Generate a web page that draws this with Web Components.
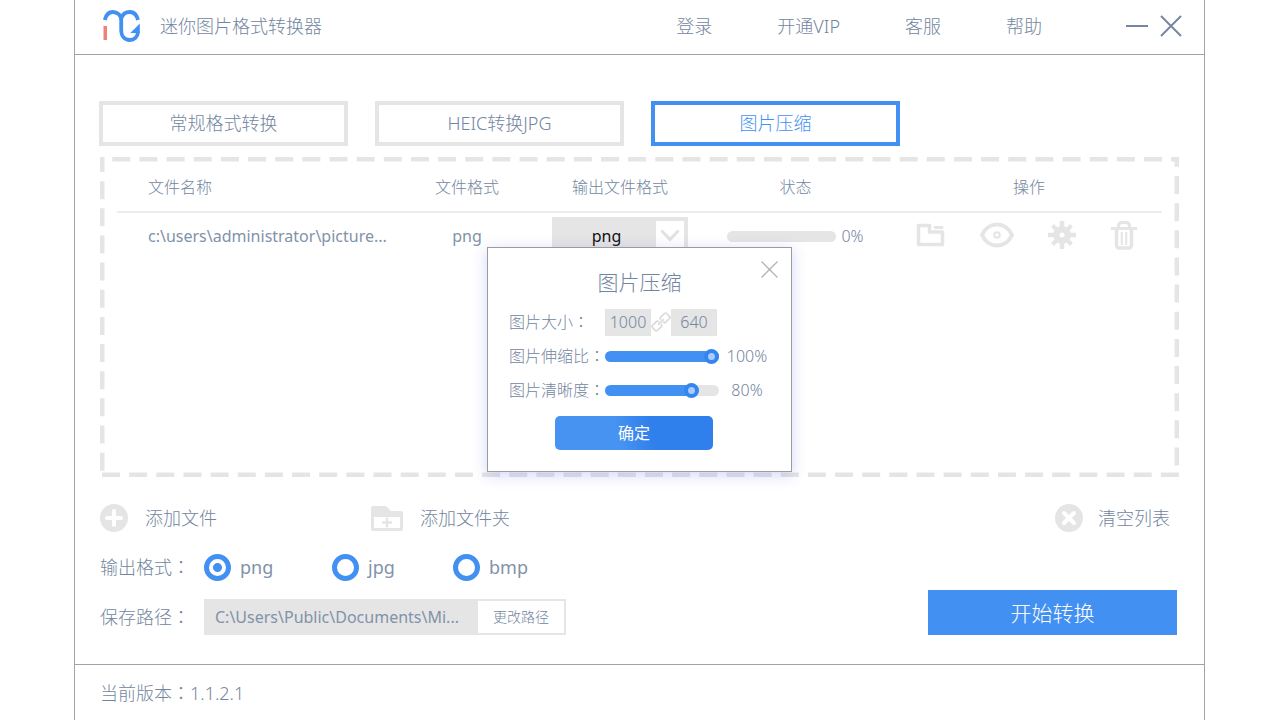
<!DOCTYPE html>
<html lang="zh-CN">
<head>
<meta charset="utf-8">
<title>迷你图片格式转换器</title>
<style>
  :root {
    --text: #7386a0;
    --text-soft: #8192aa;
    --blue: #4290f2;
    --grey: #e5e5e5;
    --line: #a3a3a3;
  }
  body {
    margin: 0;
    background: #fff;
    color: var(--text);
    font: 300 18px/24px "Noto Sans", "Noto Sans CJK SC", sans-serif;
  }
  .colon { font-family: "Noto Sans CJK TC", sans-serif; line-height: 1; }
</style>
</head>
<body>
<app-window>
  <title-bar slot="header">迷你图片格式转换器</title-bar>
  <mode-tabs></mode-tabs>
  <file-frame>
    <file-table></file-table>
    <compress-dialog slot="dialog"></compress-dialog>
  </file-frame>
  <list-actions></list-actions>
  <output-settings></output-settings>
  <span slot="footer">当前版本<span class="colon" lang="zh-TW">：</span>1.1.2.1</span>
</app-window>

<script>
const shared = `
  *, *::before, *::after { box-sizing: border-box; }
  button, input, select { font: inherit; color: inherit; margin: 0; padding: 0; border: 0; background: none; border-radius: 0; outline: none; }
  button { cursor: pointer; }
  svg { display: block; }
  .colon { font-family: "Noto Sans CJK TC", sans-serif; line-height: 1; }
`;
function define(name, css, html) {
  const template = document.createElement('template');
  template.innerHTML = `<style>${shared}${css}</style>${html}`;
  customElements.define(name, class extends HTMLElement {
    constructor() {
      super();
      this.attachShadow({ mode: 'open' }).append(template.content.cloneNode(true));
    }
  });
}

const icons = {
  logo: [38, 34, `<g fill="none" stroke="#4290f2" stroke-width="3.800"><path d="M1.800 11C3 6 6 3 9.800 3c4.500 0 8.400 3 8.400 8v10c0 6 3.500 10 8.600 10 4.500 0 7.700-3 8.200-8"/><path d="M18.200 9.500C19.500 5 23 3 26.800 3c4 0 7 3 8.200 8"/></g><path d="M36.800 14.500v9.500h-9.500z" fill="#4290f2"/><path d="M.5 17H4v14H.5z" fill="#ec8378"/>`],
  minimize: [22, 22, `<path d="M0 11h22" stroke="#7587a0" stroke-width="2"/>`],
  close: [22, 22, `<path d="M1 1l20 20M21 1L1 21" stroke="#7587a0" stroke-width="2"/>`],
  dismiss: [17, 17, `<path d="M.5.500l16 16M16.500.500l-16 16" stroke="#b4b4b4" stroke-width="1.300"/>`],
  chevron: [20, 14, `<path d="M1.500 1.500L10 10.500l8.500-9" fill="none" stroke="#e2e2e2" stroke-width="3"/>`],
  open: [30, 24, `<path d="M2.500 2.500h11v6.500h13v12.500h-24z" fill="none" stroke="#e5e5e5" stroke-width="3.500" stroke-linejoin="round"/><path d="M19 4.500h7" stroke="#e5e5e5" stroke-width="2.800" stroke-linecap="round"/>`],
  eye: [34, 26, `<path d="M2 13C8-1 26-1 32 13C26 27 8 27 2 13z" fill="none" stroke="#e5e5e5" stroke-width="4"/><circle cx="17" cy="13" r="2.800" fill="none" stroke="#e5e5e5" stroke-width="2"/>`],
  gear: [28, 28, `<g stroke="#e5e5e5" stroke-width="4.500"><path d="M14 0v28M0 14h28"/><path d="M4.500 4.500l19 19M23.500 4.500l-19 19" stroke-width="4"/></g><circle cx="14" cy="14" r="9" fill="#e5e5e5"/><circle cx="14" cy="14" r="2.500" fill="#fff"/>`],
  trash: [28, 30, `<g fill="none" stroke="#e5e5e5" stroke-width="3"><path d="M1 8.500h26"/><path d="M8.500 8V6q0-3.500 3.500-3.500h4q3.500 0 3.500 3.500v2"/><path d="M6.500 9v16q0 3 3 3h9q3 0 3-3V9" stroke-width="3.500"/><path d="M11.800 12v13M16.200 12v13" stroke-width="2"/></g>`],
  link: [20, 20, `<g transform="rotate(-45 10 10)" fill="none" stroke="#d9d9d9" stroke-width="1.600"><path d="M8.500 8.500V8q0-1.500-1.500-1.500H1.500Q0 6.500 0 8v4q0 1.500 1.500 1.500H7q1.500 0 1.500-1.500v-.5"/><path d="M11.500 8.500V8q0-1.500 1.500-1.500h5.500Q20 6.500 20 8v4q0 1.500-1.500 1.500H13q-1.500 0-1.500-1.500v-.5"/><path d="M6 10h8"/></g>`],
  add: [28, 28, `<circle cx="14" cy="14" r="14" fill="#e5e5e5"/><path d="M14 7v14M7 14h14" stroke="#fff" stroke-width="4" stroke-linecap="round"/>`],
  clear: [28, 28, `<circle cx="14" cy="14" r="14" fill="#e5e5e5"/><path d="M9 9l10 10M19 9L9 19" stroke="#fff" stroke-width="4" stroke-linecap="round"/>`],
  folder: [32, 26, `<path d="M2 1h13l5 5h10q2 0 2 2v16q0 2-2 2H2q-2 0-2-2V3Q0 1 2 1z" fill="#e5e5e5"/><path d="M3 12h26v11H3z" fill="#fff"/><path d="M16 12.500v10M11 17.500h10" stroke="#e5e5e5" stroke-width="2.400"/>`]
};
customElements.define('app-icon', class extends HTMLElement {
  connectedCallback() {
    if (this.shadowRoot) return;
    const [w, h, body] = icons[this.getAttribute('name')];
    this.attachShadow({ mode: 'open' }).innerHTML =
      `<style>:host{display:block;flex:none;width:${w}px;height:${h}px}svg{display:block}</style>` +
      `<svg width="${w}" height="${h}" viewBox="0 0 ${w} ${h}" aria-hidden="true">${body}</svg>`;
  }
});

define('app-window', `
  :host { display: flex; flex-direction: column; min-height: 100vh; box-sizing: border-box; margin: 0 75px 0 74px; border: solid var(--line); border-width: 0 1px; }
  main { flex: 1; padding: 46px 25px 28px 24px; border-bottom: 1px solid var(--line); }
  footer { display: flex; align-items: center; height: 55px; padding: 0 25px; }
`, `<slot name="header"></slot><main><slot></slot></main><footer><slot name="footer"></slot></footer>`);

define('title-bar', `
  :host { display: block; border-bottom: 1px solid var(--line); }
  header { display: flex; align-items: center; height: 54px; padding: 0 22px 2px 28px; }
  h1 { margin: 0 auto 0 19px; font: inherit; }
  nav { display: flex; gap: 65px; margin-right: 84px; }
  a { color: inherit; text-decoration: none; }
  .controls { display: flex; gap: 12px; }
`, `<header>
  <app-icon name="logo"></app-icon>
  <h1><slot></slot></h1>
  <nav><a href="#login">登录</a><a href="#vip">开通VIP</a><a href="#service">客服</a><a href="#help">帮助</a></nav>
  <div class="controls">
    <button aria-label="最小化"><app-icon name="minimize"></app-icon></button>
    <button aria-label="关闭"><app-icon name="close"></app-icon></button>
  </div>
</header>`);

define('mode-tabs', `
  :host { display: flex; gap: 27px; margin-bottom: 11px; }
  button { width: 249px; height: 45px; padding-bottom: 2px; border: 4px solid var(--grey); background: #fff; }
  button[aria-pressed=true] { border-color: var(--blue); color: var(--blue); }
`, `<button aria-pressed="false">常规格式转换</button><button aria-pressed="false">HEIC转换JPG</button><button aria-pressed="true">图片压缩</button>`);

define('file-frame', `
  :host { display: block; box-sizing: border-box; position: relative; min-height: 320px; margin-left: 1px; padding: 1px 17px; }
  .dashes { position: absolute; inset: 0; width: 100%; height: 100%; pointer-events: none; }
  line { stroke: var(--grey); stroke-width: 9; stroke-dasharray: 18 9.150; }
  ::slotted([slot=dialog]) { position: absolute; top: 90px; left: 0; right: 0; margin: 0 auto; }
`, `<svg class="dashes" aria-hidden="true">
  <line x1="0" y1="0" x2="100%" y2="0" stroke-dashoffset="14.850"/>
  <line x1="100%" y1="0" x2="100%" y2="100%" stroke-dashoffset="8.150"/>
  <line x1="0" y1="100%" x2="100%" y2="100%" stroke-dashoffset="25.150"/>
  <line x1="0" y1="0" x2="0" y2="100%" stroke-dashoffset="3"/>
</svg><slot></slot><slot name="dialog"></slot>`);

define('file-table', `
  :host { display: block; font-size: 16px; }
  table { width: 100%; table-layout: fixed; border-collapse: separate; border-spacing: 0; }
  th, td { padding: 0; text-align: center; white-space: nowrap; }
  th { height: 55px; padding-top: 4px; border-bottom: 2px solid #ededed; font-weight: inherit; }
  td { height: 46px; }
  td.name, .kind { font-weight: 400; color: var(--text-soft); }
  .name { padding-left: 31px; text-align: left; }
  .format { width: 156px; } .output { width: 150px; } .status { width: 201px; } .ops { width: 266px; }
  .pick { position: relative; width: 136px; height: 38px; margin: 0 auto; }
  select { appearance: none; width: 100%; height: 100%; padding-right: 27px; background: var(--grey); color: #111; font-weight: 400; text-align: center; text-align-last: center; }
  .arrow { position: absolute; top: 4px; right: 4px; bottom: 4px; display: grid; place-items: center; width: 28px; background: #fff; pointer-events: none; }
  .progress { display: flex; align-items: center; justify-content: center; gap: 5px; }
  .track { width: 109px; height: 11px; border-radius: 6px; background: var(--grey); }
  .tools { display: flex; align-items: center; justify-content: space-between; padding: 0 24px 2px 20px; }
`, `<table>
  <thead><tr><th class="name" scope="col">文件名称</th><th class="format" scope="col">文件格式</th><th class="output" scope="col">输出文件格式</th><th class="status" scope="col">状态</th><th class="ops" scope="col">操作</th></tr></thead>
  <tbody><tr>
    <td class="name">c:\\users\\administrator\\picture...</td>
    <td class="kind">png</td>
    <td><div class="pick"><select aria-label="输出文件格式"><option>png</option><option>jpg</option><option>bmp</option></select><span class="arrow"><app-icon name="chevron"></app-icon></span></div></td>
    <td><div class="progress"><div class="track" role="progressbar" aria-valuenow="0" aria-label="状态"></div>0%</div></td>
    <td><div class="tools">
      <button aria-label="打开"><app-icon name="open"></app-icon></button>
      <button aria-label="预览"><app-icon name="eye"></app-icon></button>
      <button aria-label="设置"><app-icon name="gear"></app-icon></button>
      <button aria-label="删除"><app-icon name="trash"></app-icon></button>
    </div></td>
  </tr></tbody>
</table>`);

define('compress-dialog', `
  :host { display: block; box-sizing: border-box; width: 305px; height: 225px; border: 1px solid #9c9ca0; background: #fff; box-shadow: 0 3px 14px rgba(70, 80, 220, .24); font-size: 16px; }
  .dismiss { position: absolute; top: 13px; right: 13px; }
  h2 { margin: 0; padding: 19px 0 13px; font-size: 21px; line-height: 30px; font-weight: inherit; text-align: center; }
  form { display: grid; grid-template-columns: 96px 114px 1fr; row-gap: 10px; align-items: center; padding: 0 16px 0 21px; }
  label { line-height: 24px; white-space: nowrap; }
  .size { display: flex; grid-column: 2 / 4; align-items: center; height: 24px; }
  .size input { width: 46px; height: 27px; background: var(--grey); text-align: center; }
  output { text-align: center; }
  input[type=range] { appearance: none; display: block; width: 100%; height: 15px; }
  input[type=range]::-webkit-slider-runnable-track { height: 11px; border-radius: 6px; background: linear-gradient(to right, var(--blue) var(--fill), var(--grey) var(--fill)); }
  input[type=range]::-webkit-slider-thumb { appearance: none; box-sizing: border-box; width: 15px; height: 15px; margin-top: -2px; border: 4px solid #3585ee; border-radius: 50%; background: #a9cbff; }
  .ok { display: block; width: 158px; height: 34px; margin: 14px 0 0 67px; border-radius: 5px; background: linear-gradient(75deg, #4693f2 40%, #2f7fec 62%); color: #fff; font-weight: 400; }
`, `<button class="dismiss" aria-label="关闭"><app-icon name="dismiss"></app-icon></button>
<h2>图片压缩</h2>
<form>
  <label for="w">图片大小<span class="colon" lang="zh-TW">：</span></label>
  <div class="size"><input id="w" value="1000"><app-icon name="link"></app-icon><input value="640" aria-label="高度"></div>
  <label for="scale">图片伸缩比<span class="colon" lang="zh-TW">：</span></label><input id="scale" type="range" value="100" style="--fill:100%"><output for="scale">100%</output>
  <label for="clarity">图片清晰度<span class="colon" lang="zh-TW">：</span></label><input id="clarity" type="range" value="80" style="--fill:78%"><output for="clarity">80%</output>
</form>
<button class="ok">确定</button>`);

define('list-actions', `
  :host { display: flex; align-items: center; margin: 27px 0 21px 1px; }
  button { display: flex; align-items: center; gap: 17px; height: 28px; }
  .file { width: 271px; }
  .clear { gap: 15px; margin: 0 9px 0 auto; }
`, `<button class="file"><app-icon name="add"></app-icon>添加文件</button>
<button><app-icon name="folder"></app-icon>添加文件夹</button>
<button class="clear"><app-icon name="clear"></app-icon>清空列表</button>`);

define('output-settings', `
  :host { display: flex; align-items: flex-end; justify-content: space-between; padding: 0 2px 0 1px; }
  fieldset { display: flex; align-items: center; height: 28px; margin: 0 0 18px; padding: 0; border: 0; }
  .caption { flex: none; width: 104px; }
  .choice { display: flex; align-items: center; gap: 9px; width: 128px; font-weight: 400; color: var(--text-soft); }
  .choice + .choice { width: 121px; }
  input[type=radio] { appearance: none; flex: none; width: 27px; height: 27px; border: 5px solid var(--blue); border-radius: 50%; }
  input[type=radio]:checked { background: radial-gradient(circle, var(--blue) 4px, #fff 5px); }
  .path { display: flex; align-items: center; }
  .box { display: flex; width: 362px; height: 36px; border: 2px solid var(--grey); background: var(--grey); }
  .box input { flex: 1; min-width: 0; padding: 0 9px; font-size: 16px; font-weight: 400; color: var(--text-soft); }
  .box button { width: 86px; background: #fff; font-size: 14px; }
  .start { width: 249px; height: 45px; background: var(--blue); color: #fff; font-size: 21px; }
`, `<div>
  <fieldset role="radiogroup" aria-labelledby="fmt"><span class="caption" id="fmt">输出格式<span class="colon" lang="zh-TW">：</span></span>
    <label class="choice"><input type="radio" name="fmt" checked>png</label>
    <label class="choice"><input type="radio" name="fmt">jpg</label>
    <label class="choice"><input type="radio" name="fmt">bmp</label>
  </fieldset>
  <div class="path"><label class="caption" for="dir">保存路径<span class="colon" lang="zh-TW">：</span></label>
    <div class="box"><input id="dir" readonly value="C:\\Users\\Public\\Documents\\Mi..."><button>更改路径</button></div>
  </div>
</div>
<button class="start">开始转换</button>`);
</script>
</body>
</html>
